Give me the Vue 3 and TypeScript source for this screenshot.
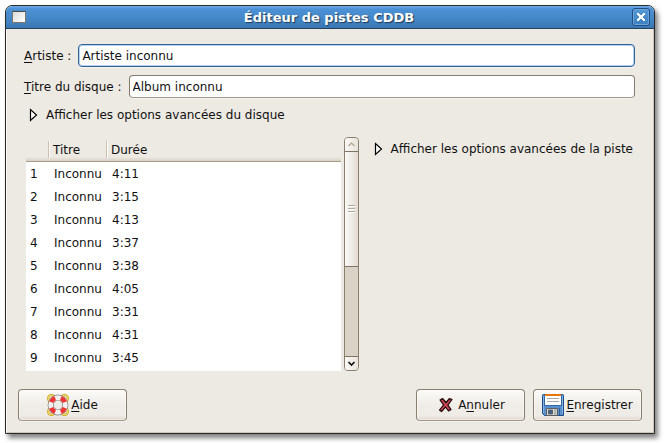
<script setup lang="ts">
import { ref } from 'vue'

interface Track {
  no: number
  title: string
  duration: string
}

const artist = ref('Artiste inconnu')
const album = ref('Album inconnu')
const discOptions = ref(false)
const trackOptions = ref(false)
const list = ref<HTMLElement | null>(null)

const durations = ['4:11', '3:15', '4:13', '3:37', '3:38', '4:05', '3:31', '4:31', '3:45']
const tracks: Track[] = durations.map((duration, i) => ({ no: i + 1, title: 'Inconnu', duration }))

function scrollList(step: number) {
  list.value?.scrollBy({ top: step * 23 })
}
</script>

<template>
  <main class="desktop">
    <section class="window">
      <header class="titlebar">
        <button class="menu" type="button"></button>
        <h1>Éditeur de pistes CDDB</h1>
        <button class="close" type="button">
          <svg width="16" height="16" viewBox="0 0 16 16">
            <path d="M4 4h2v1h1v1h2V5h1V4h2v2h-1v1h-1v2h1v1h1v2h-2v-1H9v-1H7v1H6v1H4v-2h1V9h1V7H5V6H4z" fill="#fff" />
          </svg>
        </button>
      </header>

      <form class="content" @submit.prevent>
        <div class="fields">
          <div class="field">
            <label for="artist"><u>A</u>rtiste :</label>
            <input id="artist" v-model="artist" class="focused" type="text" />
          </div>
          <div class="field">
            <label for="album"><u>T</u>itre du disque :</label>
            <input id="album" v-model="album" type="text" />
          </div>
          <button class="expander" type="button" :aria-expanded="discOptions" @click="discOptions = !discOptions">
            <svg width="9" height="14" viewBox="0 0 9 14">
              <path d="M1.5 1.5v11L7.5 7z" fill="#fff" stroke="#000" stroke-width="1.2" />
            </svg>
            <span>Afficher les options avancées du disque</span>
          </button>
        </div>

        <div class="panes">
          <div ref="list" class="list">
            <table>
              <thead>
                <tr>
                  <th class="no"></th>
                  <th class="name"><span>Titre</span></th>
                  <th><span>Durée</span></th>
                </tr>
              </thead>
              <tbody>
                <tr v-for="track in tracks" :key="track.no">
                  <td>{{ track.no }}</td>
                  <td>{{ track.title }}</td>
                  <td>{{ track.duration }}</td>
                </tr>
              </tbody>
            </table>
          </div>

          <div class="scrollbar">
            <button class="step" type="button" @click="scrollList(-1)">
              <svg width="13" height="13" viewBox="0 0 13 13">
                <path d="M3.5 8l3-3 3 3" fill="none" stroke="#b5aa98" stroke-width="1.5" />
              </svg>
            </button>
            <div class="thumb">
              <i></i><i></i><i></i>
            </div>
            <div class="trough"></div>
            <button class="step" type="button" @click="scrollList(1)">
              <svg width="13" height="13" viewBox="0 0 13 13">
                <path d="M3.5 5l3 3 3-3" fill="none" stroke="#111" stroke-width="1.7" />
              </svg>
            </button>
          </div>

          <button class="expander" type="button" :aria-expanded="trackOptions" @click="trackOptions = !trackOptions">
            <svg width="9" height="14" viewBox="0 0 9 14">
              <path d="M1.5 1.5v11L7.5 7z" fill="#fff" stroke="#000" stroke-width="1.2" />
            </svg>
            <span>Afficher les options avancées de la piste</span>
          </button>
        </div>

        <footer class="actions">
          <button class="action help" type="button">
            <svg width="22" height="22" viewBox="0 0 22 22">
              <g fill="none" stroke="#c9a21c" stroke-width="2.2">
                <circle cx="4.5" cy="4.5" r="3.4" />
                <circle cx="17.5" cy="4.5" r="3.4" />
                <circle cx="4.5" cy="17.5" r="3.4" />
                <circle cx="17.5" cy="17.5" r="3.4" />
              </g>
              <g fill="none" stroke="#f7e36a" stroke-width="1">
                <circle cx="4.5" cy="4.5" r="3.4" />
                <circle cx="17.5" cy="4.5" r="3.4" />
                <circle cx="4.5" cy="17.5" r="3.4" />
                <circle cx="17.5" cy="17.5" r="3.4" />
              </g>
              <circle cx="11" cy="11" r="7.4" fill="none" stroke="#85817e" stroke-width="6" />
              <circle cx="11" cy="11" r="7.4" fill="none" stroke="#f2f1f0" stroke-width="4.6" />
              <circle
                cx="11" cy="11" r="7.4" fill="none" stroke="#ee3434" stroke-width="4.6"
                pathLength="80" stroke-dasharray="10 10" stroke-dashoffset="-5"
              />
            </svg>
            <span><u>A</u>ide</span>
          </button>
          <button class="action cancel" type="button">
            <svg width="20" height="22" viewBox="0 0 20 22">
              <path
                d="M4 6l2.500-1.500 3.500 4L13.500 4.500l2.500 1-4 5.500 3 4.500-2.500 1.500-3-4-4 4.500-2-1.500 4-5z"
                fill="#b83242" stroke="#1c0a0c" stroke-width="1.2" stroke-linejoin="round"
              />
              <path d="M6 6l6.500 9M14 6l-8.500 10" stroke="#cc5562" stroke-width=".8" />
            </svg>
            <span>A<u>n</u>nuler</span>
          </button>
          <button class="action save" type="submit">
            <svg width="22" height="22" viewBox="0 0 22 22">
              <path d="M1.500.5h19a1 1 0 0 1 1 1v20h-19l-2-2v-18a1 1 0 0 1 1-1z" fill="#5b8fcb" stroke="#1d4a87" />
              <path d="M1.500 2v17M20.500 2v18" stroke="#86b3e2" />
              <path d="M3 1h16v10H3z" fill="#fff" />
              <path d="M3 0h16v2H3z" fill="#e8750c" />
              <path d="M5 4.500h12M5 7.500h12" stroke="#a5a7a5" />
              <path d="M2.500 2v9.500h17V2" fill="none" stroke="#3268a6" />
              <path d="M4.500 14.500h11v7h-11z" fill="#d7d8d3" stroke="#5b6064" />
              <path d="M6.500 16h4v4h-4z" fill="#41618a" stroke="#555" stroke-width=".8" />
              <path d="M12 15h2.500v6H12z" fill="#b5b8b3" />
              <path d="M17.500 14v7" stroke="#315f9a" />
            </svg>
            <span><u>E</u>nregistrer</span>
          </button>
        </footer>
      </form>
    </section>
  </main>
</template>

<style>
body {
  margin: 0;
  background: #fff;
}
</style>

<style scoped>
* {
  box-sizing: border-box;
}

.desktop {
  display: flex;
  min-height: 100vh;
  padding: 5px 9px 9px 5px;
  font: 12px/16px "DejaVu Sans", sans-serif;
  color: #111;
}

.window {
  flex: 1;
  display: flex;
  flex-direction: column;
  min-width: 0;
  border: 1px solid #2b2b2b;
  border-radius: 7px 7px 0 0;
  background: #ede9e3;
  box-shadow: 3px 4px 5px rgba(0, 0, 0, 0.5);
  overflow: hidden;
}

button,
input {
  font: inherit;
  color: inherit;
  margin: 0;
}

button {
  padding: 0;
  border: 0;
  background: none;
}

svg {
  display: block;
  flex: none;
}

u {
  text-underline-offset: 2px;
  text-decoration-thickness: 1px;
}

.titlebar {
  display: flex;
  align-items: center;
  height: 23px;
  padding: 0 4px 0 6px;
  border-bottom: 1px solid #24415f;
  background: linear-gradient(#72abe8, #4c91d6 3px, #4588c9 12px, #3a77b2);
}

.titlebar h1 {
  flex: 1;
  margin: 0;
  padding-top: 1px;
  font-size: 13px;
  line-height: 16px;
  text-align: center;
  color: #fff;
  text-shadow: 1px 1px 1px #1c3a5a;
}

.menu {
  width: 14px;
  height: 12px;
  border: 1px solid #7d756a;
  border-top-color: #4a4a48;
  background: linear-gradient(135deg, #dcdcda, #fff);
}

.close {
  width: 18px;
  height: 18px;
  border: 1px solid #21507f;
  border-radius: 3px;
  background: linear-gradient(#5697d8, #3e7fbf);
  box-shadow: inset 0 0 0 1px #6aa5df;
}

.content {
  flex: 1;
  display: flex;
  flex-direction: column;
  padding: 15px 12px 12px;
  box-shadow: inset 1px 0 #f8f6f3, inset -1px -1px #cfc6ba;
}

.fields {
  display: flex;
  flex-direction: column;
  gap: 8px;
  padding: 0 7px 0 6px;
}

.field {
  display: flex;
  align-items: center;
  gap: 7px;
}

.field input {
  flex: 1;
  min-width: 0;
  height: 23px;
  padding: 0 3px;
  border: 1px solid #857a6c;
  border-bottom-color: #a0978a;
  border-radius: 4px;
  outline: none;
  background: #fff;
  box-shadow: 0 1px #f7f5f2;
}

.field input.focused {
  border-color: #346294;
  box-shadow: inset 0 0 0 1px #b4d2f0, 0 1px #f7f5f2;
}

.expander {
  display: flex;
  align-items: center;
  align-self: flex-start;
  gap: 8px;
  padding-top: 1px;
  padding-left: 5px;
  text-align: left;
}

.panes {
  flex: 1;
  display: flex;
  min-height: 0;
  padding: 14px 7px 0 8px;
}

.list {
  flex: 1;
  min-width: 120px;
  overflow: hidden;
  background: #fff;
}

.list table {
  width: 100%;
  border-collapse: separate;
  border-spacing: 0;
  table-layout: fixed;
}

.list th {
  height: 25px;
  padding: 4px 0 3px;
  border-bottom: 1px solid #a89c88;
  background: linear-gradient(#ede9e3 20px, #d9d1c6);
  font-weight: normal;
  text-align: left;
}

.list th span {
  display: block;
  padding: 1px 0 0 4px;
  border-left: 1px solid #cbbfae;
  box-shadow: inset 1px 0 #fff;
}

.list .no {
  width: 22px;
}

.list .name {
  width: 58px;
}

.list td {
  height: 23px;
  padding: 1px 0 0 6px;
}

.list td:first-child {
  padding-left: 4px;
}

.scrollbar {
  display: flex;
  flex-direction: column;
  width: 15px;
  margin: 0 15px 0 3px;
  border: 1px solid #8b7f6c;
  border-radius: 4px;
  background: #d9d2c7;
  overflow: hidden;
}

.step {
  height: 13px;
  background: linear-gradient(90deg, #fbfaf8, #e8e2da);
}

.thumb {
  flex: 116;
  display: flex;
  flex-direction: column;
  align-items: center;
  justify-content: center;
  gap: 1px;
  border: solid #7f7361;
  border-width: 1px 0;
  background: linear-gradient(90deg, #fbfaf8, #efebe6 50%, #e2dad1);
}

.thumb i {
  width: 7px;
  height: 2px;
  border-top: 1px solid #b3a997;
  background: #fff;
}

.trough {
  flex: 90;
  border-bottom: 1px solid #7f7361;
}

.panes .expander {
  margin-top: 3px;
  padding-left: 0;
  padding-right: 2px;
}

.actions {
  display: flex;
  gap: 8px;
  padding-top: 18px;
}

.action {
  display: flex;
  align-items: center;
  justify-content: center;
  gap: 2px;
  width: 109px;
  height: 32px;
  border: 1px solid #8b8070;
  border-bottom-color: #a79787;
  border-radius: 4px;
  background: linear-gradient(#fbfaf8, #f0ede8 50%, #efebe6 85%, #e1d9d0);
  box-shadow: inset 0 0 0 1px rgba(255, 255, 255, 0.4), 0 1px #f4f1ed;
}

.help {
  margin-right: auto;
}
</style>
